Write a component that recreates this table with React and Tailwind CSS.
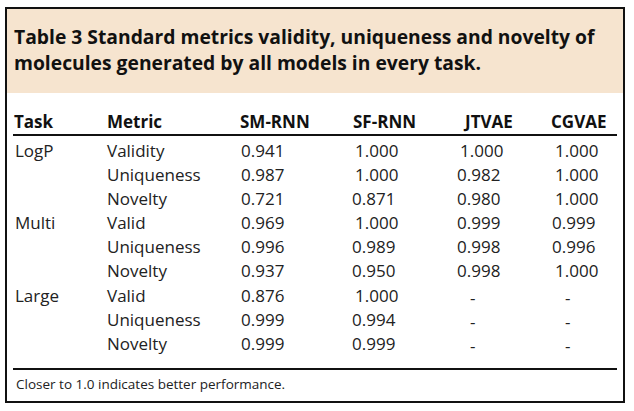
import React from "react";

const rows = [
  ["LogP", "Validity", "0.941", "1.000", "1.000", "1.000"],
  ["", "Uniqueness", "0.987", "1.000", "0.982", "1.000"],
  ["", "Novelty", "0.721", "0.871", "0.980", "1.000"],
  ["Multi", "Valid", "0.969", "1.000", "0.999", "0.999"],
  ["", "Uniqueness", "0.996", "0.989", "0.998", "0.996"],
  ["", "Novelty", "0.937", "0.950", "0.998", "1.000"],
  ["Large", "Valid", "0.876", "1.000", "-", "-"],
  ["", "Uniqueness", "0.999", "0.994", "-", "-"],
  ["", "Novelty", "0.999", "0.999", "-", "-"],
];

function Val({ v, dashPad }) {
  if (v === "-") {
    return <div className={dashPad + " translate-y-[2px]"}>-</div>;
  }
  if (v.startsWith("1")) {
    return <div className="pl-[3px]">{v}</div>;
  }
  return <div>{v}</div>;
}

export default function App() {
  return (
    <div className="w-[634px] h-[411px] bg-white pt-[7px] pl-[5px] font-['Open_Sans',sans-serif]">
      <div className="w-[620px] h-[396px] border-2 border-[#111] flex flex-col">
        <div className="h-[84px] bg-[#f6e4cf] pl-[7px] pt-[15px] text-[19.3px] leading-[26px] font-bold text-[#111]">
          Table 3 Standard metrics validity, uniqueness and novelty of
          <br />
          molecules generated by all models in every task.
        </div>
        <div className="px-[6px] pt-[17px]">
          <div className="grid grid-cols-[94px_133px_112px_105px_94px_1fr] h-[24px] leading-[24px] text-[17px] font-bold text-[#111]">
            <div className="pl-[1px]">Task</div>
            <div>Metric</div>
            <div>SM-RNN</div>
            <div className="pl-[1px]">SF-RNN</div>
            <div className="pl-[8px]">JTVAE</div>
            <div>CGVAE</div>
          </div>
          <div className="h-[2px] bg-[#111]" />
          <div className="pt-[3px] pb-[12px] text-[17px] leading-[24.1px] text-[#222]">
            {rows.map((r, i) => (
              <div key={i} className="grid grid-cols-[94px_133px_112px_105px_94px_1fr]">
                <div className="pl-[2px]">{r[0]}</div>
                <div>{r[1]}</div>
                <div className="pl-[1px]">{r[2]}</div>
                <Val v={r[3]} dashPad="pl-[13px]" />
                <Val v={r[4]} dashPad="pl-[13px]" />
                <div className="pl-[1px]">
                  <Val v={r[5]} dashPad="pl-[13px]" />
                </div>
              </div>
            ))}
          </div>
          <div className="h-[2px] bg-[#111]" />
        </div>
        <div className="pl-[9px] pt-[5px] text-[13.5px] leading-[18px] text-[#222]">
          Closer to 1.0 indicates better performance.
        </div>
      </div>
    </div>
  );
}
